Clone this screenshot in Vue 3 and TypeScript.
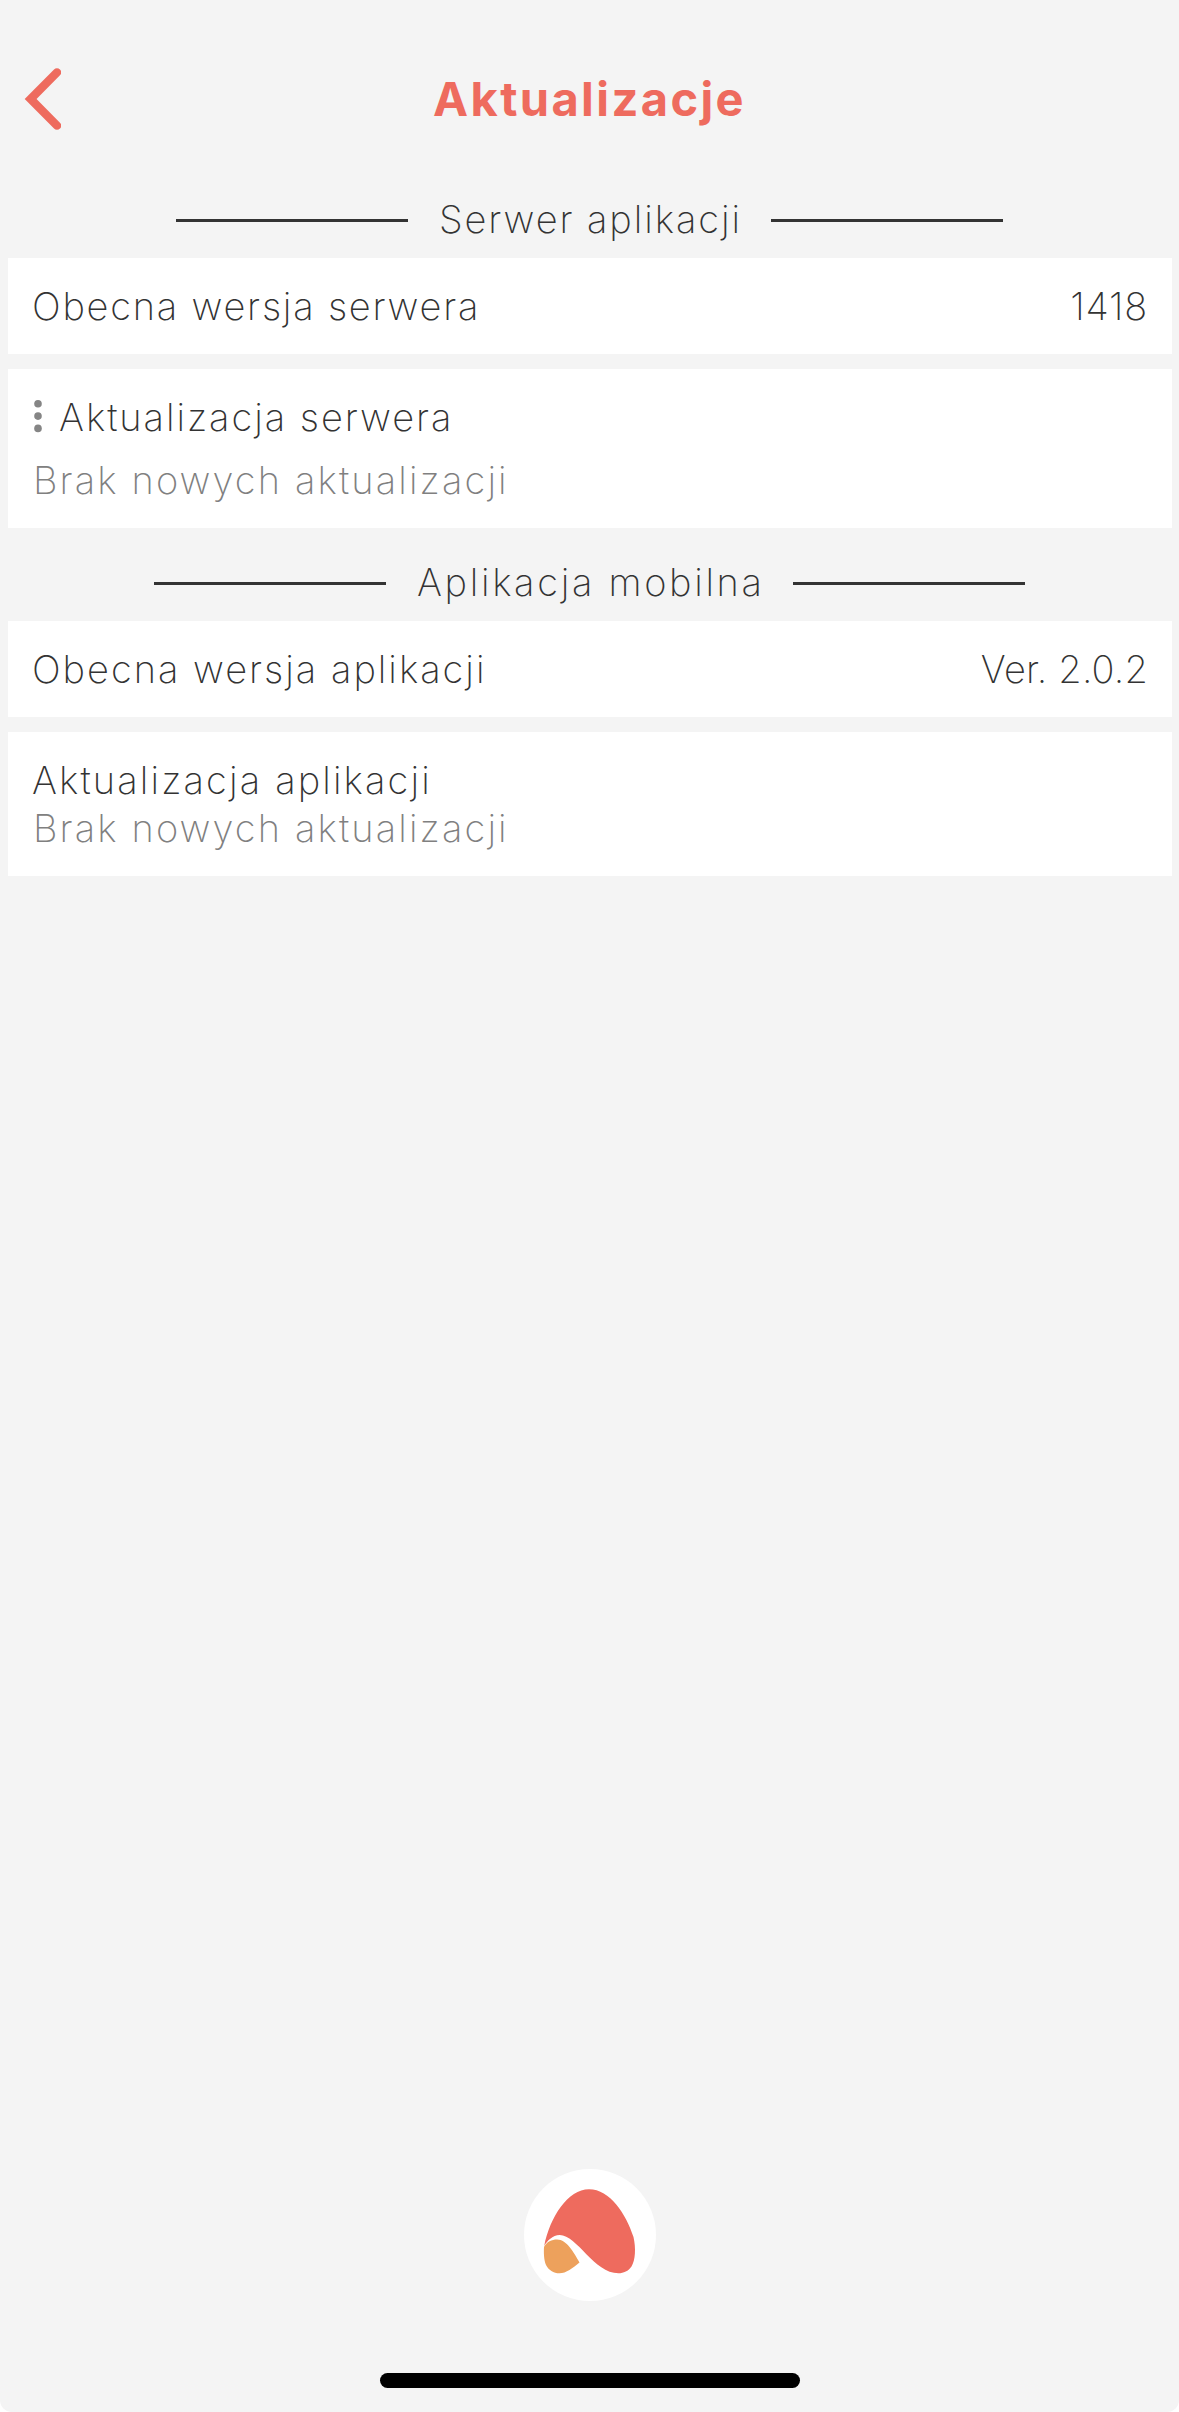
<script setup lang="ts">
interface Row {
  label: string
  spacing: number
  value?: string
  valueSpacing?: number
  note?: string
  menu?: boolean
}

interface Section {
  title: string
  spacing: number
  width: number
  rows: Row[]
}

const sections: Section[] = [
  {
    title: 'Serwer aplikacji',
    spacing: 1.92,
    width: 363,
    rows: [
      { label: 'Obecna wersja serwera', spacing: 1.77, value: '1418', valueSpacing: 0.8 },
      { label: 'Aktualizacja serwera', spacing: 1.95, note: 'Brak nowych aktualizacji', menu: true },
    ],
  },
  {
    title: 'Aplikacja mobilna',
    spacing: 2.67,
    width: 407,
    rows: [
      { label: 'Obecna wersja aplikacji', spacing: 1.99, value: 'Ver. 2.0.2', valueSpacing: 0.15 },
      { label: 'Aktualizacja aplikacji', spacing: 2.13, note: 'Brak nowych aktualizacji' },
    ],
  },
]
</script>

<template>
  <div class="screen">
    <header class="header">
      <button class="back" aria-label="Wstecz">
        <svg width="40" height="66" viewBox="0 0 40 66">
          <path d="M36 6.4 9.6 33 36 59.6" fill="none" stroke="#ee6b5e" stroke-width="8.4" stroke-linecap="round" stroke-linejoin="miter" />
        </svg>
      </button>
      <h1>Aktualizacje</h1>
    </header>

    <section v-for="section in sections" :key="section.title" class="section">
      <div class="divider">
        <span class="line"></span>
        <h2 :style="{ width: section.width + 'px', letterSpacing: section.spacing + 'px' }">{{ section.title }}</h2>
        <span class="line"></span>
      </div>
      <div v-for="row in section.rows" :key="row.label" class="card" :class="{ spaced: row.menu }">
        <div class="main">
          <svg v-if="row.menu" class="dots" width="12" height="36" viewBox="0 0 12 36">
            <circle cx="6" cy="4.8" r="3.8" />
            <circle cx="6" cy="17.1" r="3.8" />
            <circle cx="6" cy="29.4" r="3.8" />
          </svg>
          <span class="label" :style="{ letterSpacing: row.spacing + 'px' }">{{ row.label }}</span>
          <span v-if="row.value" class="value" :style="{ letterSpacing: row.valueSpacing + 'px' }">{{ row.value }}</span>
        </div>
        <div v-if="row.note" class="note">{{ row.note }}</div>
      </div>
    </section>

    <footer class="footer">
      <div class="logo">
        <svg width="132" height="132" viewBox="0 0 132 132">
          <path d="M20.200 77C26 48 44 20.300 65 20.300C86 20.300 102 45 109.500 68C112 79 111.500 91 107.500 97.500C104.500 102 99.500 104.300 94.500 104.300C70 104.300 53 66 35.700 66C28.500 66 23 72 20.200 77Z" fill="#ee6b5e" />
          <path d="M20 78C22.500 73 28 70.600 33 70.600C43 70.600 50 84 55.500 93.500C49 99 42 104.300 35.500 104.300C29.500 104.300 24.500 101 22 96C19.800 91 19.700 83 20 78Z" fill="#eda15c" />
        </svg>
      </div>
      <div class="home"></div>
    </footer>
  </div>
</template>

<style>
body {
  margin: 0;
  background: #fff;
}
</style>

<style scoped>
.screen {
  box-sizing: border-box;
  display: flex;
  flex-direction: column;
  width: 1179px;
  height: 2412px;
  overflow: hidden;
  background: #f4f4f4;
  border-radius: 0 0 12px 12px;
  color: #333;
  font-family: Inter, sans-serif;
  font-size: 38px;
  font-weight: 200;
  line-height: 48px;
}

.header {
  display: grid;
  grid-template-columns: 61px 1fr 61px;
  align-items: center;
  height: 129px;
  padding-top: 34px;
  margin-bottom: 2px;
}

.back {
  justify-self: end;
  width: 40px;
  height: 66px;
  padding: 0;
  border: 0;
  background: none;
}

.back svg {
  display: block;
}

h1 {
  margin: 0;
  color: #ee6b5e;
  font-size: 47px;
  font-weight: 700;
  line-height: 58px;
  letter-spacing: 2.4px;
  text-align: center;
}

.section {
  padding: 30px 7px 0 8px;
}

.divider {
  display: flex;
  align-items: center;
  justify-content: center;
  margin: 0 1px 15px 0;
}

.divider h2 {
  box-sizing: border-box;
  margin: 0;
  padding-left: 31px;
  font-size: inherit;
  font-weight: inherit;
  white-space: nowrap;
}

.line {
  width: 232px;
  height: 3px;
  margin-top: 3px;
  background: #333;
}

.card {
  padding: 24px;
  background: #fff;
}

.card + .card {
  margin-top: 15px;
}

.main {
  display: flex;
  align-items: center;
}

.dots {
  margin-right: 15px;
  fill: #858585;
}

.value {
  margin-left: auto;
}

.note {
  padding-left: 1px;
  color: #808080;
  letter-spacing: 2.12px;
}

.spaced .note {
  margin-top: 15px;
}

.footer {
  display: flex;
  flex-direction: column;
  align-items: center;
  margin-top: auto;
  padding-bottom: 24px;
}

.logo {
  width: 132px;
  height: 132px;
  border-radius: 50%;
  background: #fff;
  overflow: hidden;
}

.logo svg {
  display: block;
}

.home {
  width: 420px;
  height: 15px;
  margin-top: 72px;
  border-radius: 8px;
  background: #000;
}
</style>
